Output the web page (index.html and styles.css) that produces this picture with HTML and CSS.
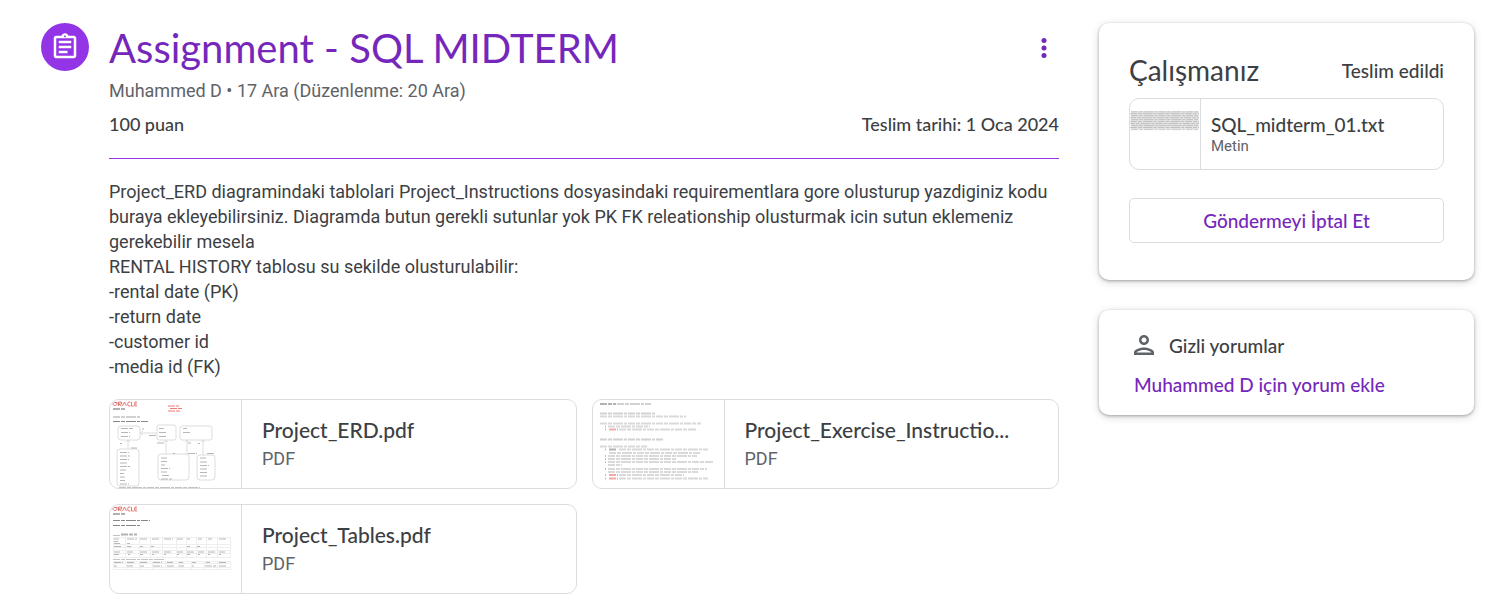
FILE: index.html
```html
<!DOCTYPE html>
<html lang="tr">
<head>
<meta charset="utf-8">
<title>Assignment - SQL MIDTERM</title>
<meta name="viewport" content="width=device-width, initial-scale=1">
<link rel="stylesheet" href="styles.css">
</head>
<body>
<div class="page">
  <div class="badge">
    <svg class="icon" viewBox="0 0 24 24" aria-hidden="true"><path d="M7 15h7v2H7zm0-4h10v2H7zm0-4h10v2H7z"/><path d="M19 3h-4.180C14.400 1.840 13.300 1 12 1c-1.300 0-2.400.84-2.820 2H5c-.14 0-.27.01-.4.040a2.008 2.008 0 0 0-1.440 1.190c-.1.230-.16.490-.16.770v14c0 .27.060.54.160.78s.25.450.430.640c.27.270.620.470 1.010.550.130.020.260.030.400.030h14c1.100 0 2-.9 2-2V5c0-1.100-.9-2-2-2zm-7-.25c.41 0 .75.340.750.750s-.34.750-.75.750-.75-.34-.75-.75.340-.75.750-.75zM19 19H5V5h14v14z"/></svg>
  </div>
  <main class="assignment">
    <header class="header">
      <div class="title-row">
        <h1 class="title">Assignment - SQL MIDTERM</h1>
        <button class="menu-button" type="button" aria-label="Diğer seçenekler">
          <svg class="icon" viewBox="0 0 24 24" aria-hidden="true"><circle cx="12" cy="6" r="2"/><circle cx="12" cy="12" r="2"/><circle cx="12" cy="18" r="2"/></svg>
        </button>
      </div>
      <p class="byline">Muhammed D • 17 Ara (Düzenlenme: 20 Ara)</p>
      <div class="facts"><span>100 puan</span><span>Teslim tarihi: 1 Oca 2024</span></div>
    </header>
    <p class="description">Project_ERD diagramindaki tablolari Project_Instructions dosyasindaki requirementlara gore olusturup yazdiginiz kodu buraya ekleyebilirsiniz. Diagramda butun gerekli sutunlar yok PK FK releationship olusturmak icin sutun eklemeniz gerekebilir mesela<br>RENTAL HISTORY tablosu su sekilde olusturulabilir:<br>-rental date (PK)<br>-return date<br>-customer id<br>-media id (FK)</p>
    <div class="attachments">
      <a class="attachment" href="#erd">
        <svg class="thumb" viewBox="0 0 131 88" aria-hidden="true">
          <g class="oracle"><path d="M5 2.500h2.500M3 4c0-2 4-2 4 0s-4 2-4 0M8.500 6V2h3v2h-3l3 2M12.500 6l2-4 2 4M20.500 2h-2q-2 2 0 4h2M21.500 2v4h2.500M27 2h-2q-1 2 0 4h2M25 4h2"/></g>
          <path class="ink dark" d="M3 9h13"/>
          <path class="ink red fine" d="M58 6h11M60 8.500h12M58 11h13"/>
          <path class="ink" d="M3 17h27"/>
          <path class="ink dark fine" d="M3 21.500h36"/>
          <g class="box"><rect x="8" y="26" width="22" height="14" rx="3"/><rect x="47" y="25" width="19" height="15" rx="2"/><rect x="70" y="26" width="32" height="14" rx="2"/><rect x="7" y="49" width="22" height="37" rx="3"/><rect x="48" y="54" width="31" height="26" rx="3"/><rect x="87" y="55" width="18" height="25" rx="3"/><path d="M30 33h17M18 40v9M56 40v14M77 40v15M93 40v15M16 42l2-2 2 2M54 42l2-2 2 2M75 42l2-2 2 2M91 42l2-2 2 2M33 31l-3 2 3 2"/></g>
          <path class="ink fine" d="M11 28.500h13M11 32.500h9M11 36.500h9M49 28.500h5M49 32.500h8M49 36.500h7M73 28.500h4M73 32.500h8M10 52.500h9M10 56h10M10 59.500h9M10 63h8M10 66.500h10M10 70h6M10 73.500h4M10 77h5M10 80.500h5M10 84h9M51 58h6M51 61.500h6M51 65h4M51 68.500h9M51 72h6M52 75.500h7M51 79h11M90 58h6M90 62h7M90 65.500h9M90 69h8M90 72.500h7M90 76h8M10 43.500h2M21 48h6M39 35.500h7M47 43h7M78 53.500h9M97 53.500h8M32 29h2M63 53.500h2M78 43h3M88 43.500h2"/>
          <path class="ink pale fine" d="M9 87.500h81"/>
        </svg>
        <span class="attachment-text"><span class="attachment-name">Project_ERD.pdf</span><span class="attachment-type">PDF</span></span>
      </a>
      <a class="attachment" href="#instructions">
        <svg class="thumb" viewBox="0 0 131 88" aria-hidden="true">
          <path class="ink dark" d="M7 4h16"/>
          <path class="ink" d="M24 4h34M7 13.500h56M7 39.500h63"/>
          <path class="ink pale" d="M7 16.500h86M7 23.500h101M15 26.500h42M26 29.500h77M7 46.500h47M26 49.500h89M16 53h92M15 56h89M15 59h69M15 62h105M15 65h14M15 69h99M15 72h90M26 75h65M26 78.500h89"/>
          <path class="ink dark" d="M16 49.500h8"/>
          <path class="ink red" d="M12 26.500h1M12 29.500h1M16 29.500h9M12 49.500h1M12 56h1M12 59h1M12 62h1M12 69h1M12 75h1M16 75h9M12 78.500h1M16 78.500h9"/>
        </svg>
        <span class="attachment-text"><span class="attachment-name">Project_Exercise_Instructio...</span><span class="attachment-type">PDF</span></span>
      </a>
      <a class="attachment" href="#tables">
        <svg class="thumb" viewBox="0 0 131 88" aria-hidden="true">
          <g class="oracle"><path d="M5 2.500h2.500M3 4c0-2 4-2 4 0s-4 2-4 0M8.500 6V2h3v2h-3l3 2M12.500 6l2-4 2 4M20.500 2h-2q-2 2 0 4h2M21.500 2v4h2.500M27 2h-2q-1 2 0 4h2M25 4h2"/></g>
          <path class="ink dark" d="M3 9h13M11 29.500h16"/>
          <path class="ink dark fine" d="M3 15.500h37M3 20.500h28"/>
          <path class="ink pale fine" d="M3 30.500h7M3 54.500h52"/>
          <path class="grid" d="M3.500 32.500h117M3.500 39.500h117M3.500 42.500h117M3.500 45.500h117M3.500 48.500h117M3.500 52.500h117M3.500 32.500v20M15.500 32.500v20M29.500 32.500v20M40.500 32.500v20M52.500 32.500v20M66.500 32.500v20M76.500 32.500v20M86.500 32.500v20M96.500 32.500v20M107.500 32.500v20M120.500 32.500v20M3.500 56.500h117M3.500 58.500h117M3.500 62.500h117M3.500 64.500h117M3.500 56.500v8M16.500 56.500v8M29.500 56.500v8M42.500 56.500v8M55.500 56.500v8M68.500 56.500v8M81.500 56.500v8M94.500 56.500v8M107.500 56.500v8M120.500 56.500v8"/>
          <path class="ink fine" d="M4 34h5M17 34h10M30 34h7M42 34h7M54 34h9M67 34h6M77 34h3M88 34h4M98 34h4M109 34h8M4 36.500h4M4 38.500h6M17 38.500h3M4 41.500h8M17 41.500h4M30 41.500h3M41 41.500h3M77 41.500h3M87 41.500h3M4 47h6M17 47h6M30 47h8M42 47h7M54 47h7M67 47h6M77 47h7M88 47h6M98 47h7M109 47h6M4 49.500h5M18 49.500h2M30 49.500h3M42 49.500h2M54 49.500h2M67 49.500h2M77 49.500h3M88 49.500h2M98 49.500h2M109 49.500h2M4 57.500h9M17 57.500h8M30 57.500h8M43 57.500h9M57 57.500h6M69 57.500h4M82 57.500h4M96 57.500h4M109 57.500h8M4 61h3M17 61h6M30 61h4M43 61h9M57 61h7M69 61h5M82 61h2M95 61h11M109 61h8"/>
        </svg>
        <span class="attachment-text"><span class="attachment-name">Project_Tables.pdf</span><span class="attachment-type">PDF</span></span>
      </a>
    </div>
  </main>
  <aside class="sidebar">
    <section class="card">
      <div class="card-head"><h2 class="card-title">Çalışmanız</h2><span class="status">Teslim edildi</span></div>
      <a class="submission" href="#submission">
        <svg class="submission-thumb" viewBox="0 0 71 70" aria-hidden="true"><path class="wash" d="M1 12h69v18H1z"/><path class="ink text" d="M1 12.500h68M0 14.500h70M1 16.500h68M-1 18.500h71M1 20.500h68M0 22.500h70M-2 24.500h72M1 26.500h68M0 28.500h70M1 30.500h69"/></svg>
        <span class="submission-text"><span class="submission-name">SQL_midterm_01.txt</span><span class="submission-type">Metin</span></span>
      </a>
      <button class="unsubmit" type="button">Göndermeyi İptal Et</button>
    </section>
    <section class="card comments">
      <div class="comments-head">
        <svg class="icon" viewBox="0 0 24 24" aria-hidden="true"><path d="M12 6c1.100 0 2 .9 2 2s-.9 2-2 2-2-.9-2-2 .9-2 2-2m0 10c2.700 0 5.800 1.290 6 2H6c.23-.72 3.310-2 6-2m0-12C9.790 4 8 5.790 8 8s1.790 4 4 4 4-1.790 4-4-1.790-4-4-4zm0 10c-2.670 0-8 1.340-8 4v2h16v-2c0-2.660-5.330-4-8-4z"/></svg>
        <h2 class="comments-title">Gizli yorumlar</h2>
      </div>
      <button class="add-comment" type="button">Muhammed D için yorum ekle</button>
    </section>
  </aside>
</div>
</body>
</html>
```
FILE: styles.css
```css
* { box-sizing: border-box; }
body { margin: 0; background: #fff; color: #3c4043; font: 18px/25px Roboto, sans-serif; }
h1, h2, p { margin: 0; font-weight: 400; }
a { color: inherit; text-decoration: none; }
button { padding: 0; border: 0; background: none; cursor: pointer; }
.page { display: grid; grid-template-columns: 48px minmax(0, 1fr) 375px; align-items: start; padding: 23px 21px 21px 41px; }
.icon { display: block; width: 30px; height: 30px; flex: none; fill: currentColor; }
.badge { display: flex; align-items: center; justify-content: center; height: 48px; border-radius: 50%; background: #9334e6; color: #fff; }
.assignment { margin: 0 40px 0 20px; }
.header { padding-bottom: 21px; border-bottom: 1px solid #9334e6; }
.title-row { display: flex; align-items: center; justify-content: space-between; }
.title { font: 400 40px/50px Lato, sans-serif; color: #7627bb; }
.menu-button { color: #7627bb; }
.byline { margin-top: 5px; color: #5f6368; }
.facts { display: flex; justify-content: space-between; margin-top: 9px; font: 500 18px/25px Lato, sans-serif; }
.description { margin-top: 20px; }
.attachments { display: grid; grid-template-columns: repeat(2, minmax(0, 1fr)); gap: 15px; margin-top: 20px; }
.attachment, .submission { display: flex; align-items: center; overflow: hidden; border: 1px solid #dadce0; border-radius: 10px; }
.attachment { height: 90px; }
.thumb { width: 132px; height: 88px; flex: none; border-right: 1px solid #dadce0; }
.attachment-text { display: flex; flex: 1; flex-direction: column; gap: 4px; min-width: 0; padding: 0 20px; }
.attachment-name { overflow: hidden; font: 500 21px/25px Lato, sans-serif; text-overflow: ellipsis; white-space: nowrap; }
.attachment-type { color: #5f6368; }
.ink { fill: none; stroke: #999; stroke-width: 2; stroke-dasharray: 7 1 4 1 10 1 3 1; opacity: .45; }
.dark { stroke: #555; }
.red { stroke: #e8403c; }
.pale { stroke: #aaa; }
.fine { stroke-width: 1; opacity: .7; }
.text { stroke: #888; stroke-width: 1; }
.wash { fill: #e8e8e8; }
.oracle { fill: none; stroke: #d9534f; stroke-width: 1; opacity: .75; }
.box, .grid { fill: none; stroke: #ddd; stroke-width: 1; }
.grid { stroke: #eee; }
.sidebar { display: grid; gap: 30px; }
.card { padding: 30px 30px 37px; border-radius: 10px; box-shadow: 0 1px 3px rgba(60, 64, 67, .4), 0 2px 8px rgba(60, 64, 67, .2); }
.card-head { display: flex; align-items: center; justify-content: space-between; }
.card-title { font: 400 28px/35px Lato, sans-serif; }
.status { font: 500 19px/23px Lato, sans-serif; }
.submission { height: 72px; margin-top: 10px; }
.submission-thumb { width: 71px; height: 70px; flex: none; border-right: 1px solid #dadce0; }
.submission-text { display: flex; flex-direction: column; padding: 0 10px; }
.submission-name { font: 500 19px/23px Lato, sans-serif; }
.submission-type { color: #5f6368; font-size: 15px; line-height: 20px; }
.unsubmit { width: 100%; height: 45px; margin-top: 28px; border: 1px solid #dadce0; border-radius: 5px; color: #7627bb; font: 500 19px/23px Lato, sans-serif; }
.comments { padding: 20px 30px 19px; }
.comments-head { display: flex; align-items: center; gap: 10px; color: #5f6368; }
.comments-title { color: #3c4043; font: 500 19px/23px Lato, sans-serif; }
.add-comment { display: block; margin: 13px 5px 0; color: #7627bb; font: 500 19px/23px Lato, sans-serif; }
```
